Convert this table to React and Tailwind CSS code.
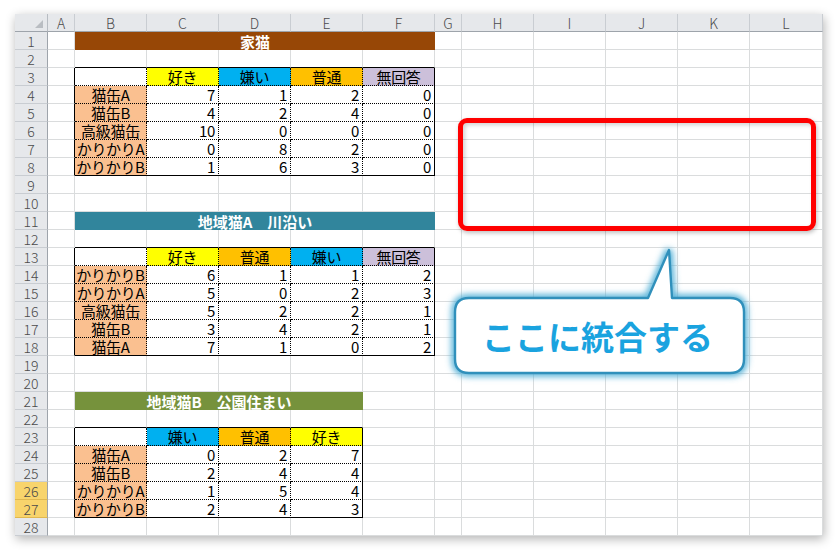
import React from "react";

const COLS = ["A", "B", "C", "D", "E", "F", "G", "H", "I", "J", "K", "L"];

const HEAD_BG = {
  "好き": "bg-[#ffff00]",
  "嫌い": "bg-[#00b0f0]",
  "普通": "bg-[#ffc000]",
  "無回答": "bg-[#ccc0da]",
};

const TABLES = [
  {
    top: 3,
    left: 2,
    headers: ["好き", "嫌い", "普通", "無回答"],
    rows: [
      ["猫缶A", 7, 1, 2, 0],
      ["猫缶B", 4, 2, 4, 0],
      ["高級猫缶", 10, 0, 0, 0],
      ["かりかりA", 0, 8, 2, 0],
      ["かりかりB", 1, 6, 3, 0],
    ],
  },
  {
    top: 13,
    left: 2,
    headers: ["好き", "普通", "嫌い", "無回答"],
    rows: [
      ["かりかりB", 6, 1, 1, 2],
      ["かりかりA", 5, 0, 2, 3],
      ["高級猫缶", 5, 2, 2, 1],
      ["猫缶B", 3, 4, 2, 1],
      ["猫缶A", 7, 1, 0, 2],
    ],
  },
  {
    top: 23,
    left: 2,
    headers: ["嫌い", "普通", "好き"],
    rows: [
      ["猫缶A", 0, 2, 7],
      ["猫缶B", 2, 4, 4],
      ["かりかりA", 1, 5, 4],
      ["かりかりB", 2, 4, 3],
    ],
  },
];

const TITLES = {
  1: { span: 5, text: "家猫", cls: "bg-[#974706]" },
  11: { span: 5, text: "地域猫A　川沿い", cls: "bg-[#31859c]" },
  21: { span: 4, text: "地域猫B　公園住まい", cls: "bg-[#76923c]" },
};

function tableInfo(r, c) {
  for (const t of TABLES) {
    const bottom = t.top + t.rows.length;
    const right = t.left + t.headers.length;
    if (r >= t.top && r <= bottom && c >= t.left && c <= right) {
      const ri = r - t.top;
      const ci = c - t.left;
      let content = null;
      let bg = "";
      let align = "center";
      if (ri === 0) {
        if (ci > 0) {
          content = t.headers[ci - 1];
          bg = HEAD_BG[content];
        }
      } else {
        const row = t.rows[ri - 1];
        content = row[ci];
        if (ci === 0) bg = "bg-[#fac090]";
        else align = "right";
      }
      return {
        inTable: true,
        content,
        bg,
        align,
        rightSolid: c === right,
        bottomSolid: r === bottom,
      };
    }
    if (r === t.top - 1 && c >= t.left && c <= right) return { above: true };
    if (c === t.left - 1 && r >= t.top && r <= bottom) return { leftOf: true };
  }
  return null;
}

function Cell({ r, c }) {
  const info = tableInfo(r, c);
  if (info && info.inTable) {
    const rb = info.rightSolid
      ? "border-r border-r-black"
      : "border-r border-r-black [border-right-style:dotted]";
    const bb = info.bottomSolid
      ? "border-b border-b-black"
      : "border-b border-b-black [border-bottom-style:dotted]";
    const al = info.align === "right" ? "justify-end pr-[3px]" : "justify-center";
    return (
      <div className={`h-[18px] flex items-center ${rb} ${bb} ${info.bg || "bg-white"} ${al}`}>
        <span className="text-[15px] leading-[15px] text-black whitespace-nowrap tracking-[-0.3px]">
          {info.content}
        </span>
      </div>
    );
  }
  if (info && info.above) {
    return <div className="h-[18px] border-r border-b border-r-[#dadcdd] border-b-black bg-white" />;
  }
  if (info && info.leftOf) {
    return <div className="h-[18px] border-r border-b border-r-black border-b-[#dadcdd] bg-white" />;
  }
  return <div className="h-[18px] border-r border-b border-[#dadcdd] bg-white" />;
}

function Sheet() {
  const cells = [];
  cells.push(
    <div key="corner" className="h-[18px] relative bg-[#e6e8eb] border-r border-b border-r-[#b7bcc2] border-b-[#9ea4ab]">
      <svg className="absolute right-[4px] bottom-[3px]" width="8" height="8" viewBox="0 0 8 8">
        <polygon points="8,0 8,8 0,8" fill="#b9bdc2" />
      </svg>
    </div>
  );
  COLS.forEach((l) => {
    cells.push(
      <div
        key={"h" + l}
        className="h-[18px] flex items-center justify-center bg-[#e6e8eb] border-r border-b border-r-[#c9cdd2] border-b-[#9ea4ab] text-[14px] font-light text-[#4b4b4b] leading-[14px]"
      >
        {l}
      </div>
    );
  });
  for (let r = 1; r <= 28; r++) {
    const hl = r === 26 || r === 27;
    cells.push(
      <div
        key={"r" + r}
        className={`h-[18px] flex items-center justify-center border-r border-b border-r-[#9ea4ab] ${
          hl ? "bg-[#f8d46c] border-b-[#e0b850]" : "bg-[#e6e8eb] border-b-[#c9cdd2]"
        } text-[14px] font-light text-[#4b4b4b] leading-[14px]`}
      >
        {r}
      </div>
    );
    const title = TITLES[r];
    for (let c = 1; c <= 12; c++) {
      if (title && c === 2) {
        cells.push(
          <div
            key={`t${r}`}
            className={`h-[18px] flex items-center justify-center ${title.cls} ${
              title.span === 5 ? "col-span-5" : "col-span-4"
            }`}
          >
            <span className="text-[15px] font-bold text-white leading-[15px] whitespace-pre">{title.text}</span>
          </div>
        );
        c += title.span - 1;
        continue;
      }
      cells.push(<Cell key={`c${r}-${c}`} r={r} c={c} />);
    }
  }
  return (
    <div className="grid grid-cols-[33px_27px_72px_72px_72px_72px_72px_27px_72px_72px_72px_72px_73px] w-[808px] shadow-[1px_3px_10px_rgba(0,0,0,0.3)] bg-white">
      {cells}
    </div>
  );
}

function Callout() {
  const d =
    "M 29 62 L 208 62 L 229 14 L 232 62 L 290 62 Q 304 62 304 76 L 304 123 Q 304 137 290 137 L 29 137 Q 15 137 15 123 L 15 76 Q 15 62 29 62 Z";
  return (
    <div className="absolute left-[440px] top-[236px] w-[320px] h-[152px]">
      <svg width="320" height="152" viewBox="0 0 320 152" className="absolute left-0 top-0">
        <defs>
          <filter id="glow" x="-20%" y="-30%" width="140%" height="160%">
            <feGaussianBlur stdDeviation="3.2" />
          </filter>
        </defs>
        <path d={d} fill="none" stroke="#4eaed6" strokeWidth="7" filter="url(#glow)" />
        <path d={d} fill="#ffffff" stroke="#3090bb" strokeWidth="2.4" strokeLinejoin="round" />
      </svg>
      <div className="absolute left-[15px] top-[62px] w-[289px] h-[75px] flex items-center justify-center pr-[4px] pt-[2px]">
        <span className="text-[33px] font-bold text-[#1aa3df] leading-[33px]">ここに統合する</span>
      </div>
    </div>
  );
}

export default function App() {
  return (
    <div
      className="relative w-[838px] h-[552px] bg-white overflow-hidden pl-[15px] pt-[14px]"
      style={{ fontFamily: '"Noto Sans CJK JP", "Noto Sans", sans-serif' }}
    >
      <Sheet />
      <div className="absolute left-[458px] top-[118px] w-[358px] h-[113px] border-[5px] border-[#ff0000] rounded-[9px] shadow-[1px_2px_4px_rgba(0,0,0,0.25),inset_2px_2px_4px_rgba(0,0,0,0.18)]" />
      <Callout />
    </div>
  );
}
